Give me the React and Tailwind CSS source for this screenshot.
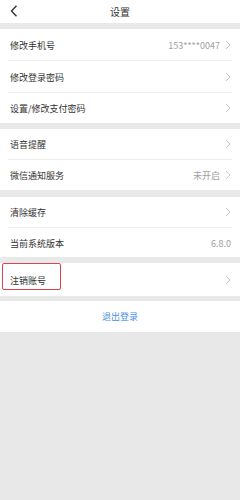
import React from 'react';

const font = { fontFamily: '"Noto Sans CJK SC", "Noto Sans", sans-serif' };

function Chevron() {
  return (
    <svg width="6" height="10" viewBox="0 0 6 10" className="ml-[5px]">
      <path d="M1 1 L5 5 L1 9" fill="none" stroke="#c8c8c8" strokeWidth="1" />
    </svg>
  );
}

function Row({ label, value, arrow = true, h = 'h-[30px]' }) {
  return (
    <div className={`flex items-center justify-between pl-[10px] pr-[9px] bg-white ${h}`}>
      <span className="text-[9px] text-[#333] pt-[2px]">{label}</span>
      <div className="flex items-center">
        {value && <span className="text-[9px] text-[#a0a0a0] pt-[2px]">{value}</span>}
        {arrow && <Chevron />}
      </div>
    </div>
  );
}

const Divider = () => (
  <div className="bg-white">
    <div className="mx-2 h-px bg-[#ececec]" />
  </div>
);

const Gap = ({ h }) => <div className={`bg-[#e9e9e9] ${h}`} />;

export default function App() {
  return (
    <div className="w-[240px] h-[500px] bg-[#e8e8e8] flex flex-col" style={font}>
      {/* Header */}
      <div className="relative h-[23px] bg-white flex items-center justify-center">
        <svg width="8" height="12" viewBox="0 0 8 12" className="absolute left-[10px] top-[5px]">
          <path d="M6.5 0.8 L1.5 6 L6.5 11.2" fill="none" stroke="#333" strokeWidth="1.4" />
        </svg>
        <span className="text-[10px] text-[#333]">设置</span>
      </div>
      <Gap h="h-[6px]" />

      <Row label="修改手机号" value="153****0047" h="h-[31px]" />
      <Divider />
      <Row label="修改登录密码" h="h-[31px]" />
      <Divider />
      <Row label="设置/修改支付密码" h="h-[30px]" />
      <Gap h="h-[6px]" />

      <Row label="语音提醒" />
      <Divider />
      <Row label="微信通知服务" value="未开启" />
      <Gap h="h-[7px]" />

      <Row label="清除缓存" />
      <Divider />
      <Row label="当前系统版本" value="6.8.0" arrow={false} h="h-[29px]" />
      <Gap h="h-[6px]" />

      <div className="relative">
        <Row label="注销账号" h="h-[33px]" />
        <div className="absolute left-[2px] top-0 w-[59px] h-[27px] border border-[#d9434b] rounded-[2px]" />
      </div>
      <Gap h="h-[5px]" />

      <div className="h-[31px] bg-white flex items-center justify-center">
        <span className="text-[9px] text-[#4a8fe0] pt-[1px]">退出登录</span>
      </div>
    </div>
  );
}
